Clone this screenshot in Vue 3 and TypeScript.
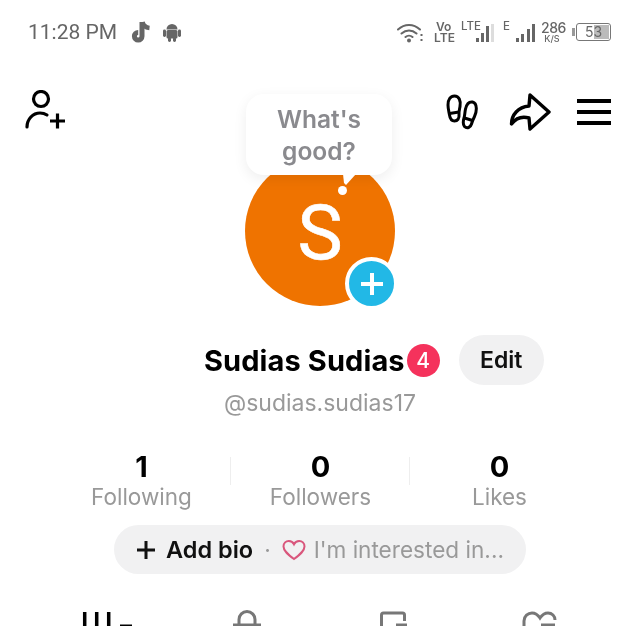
<template>
  <div class="profile">
    <div class="status-bar">
      <span class="time">11:28 PM</span>
      <svg class="tiktok" width="22" height="24" viewBox="0 0 22 24">
        <path d="M12 2v14.200a3.800 3.800 0 1 1-3.800-3.800" fill="none" stroke="#666" stroke-width="5" />
        <path d="M12.500 2c.6 3.400 3 5.600 7 6" fill="none" stroke="#666" stroke-width="4.600" />
      </svg>
      <svg class="android" width="18" height="20" viewBox="0 0 18 20">
        <path d="M3.500 7.500a5.500 5.500 0 0 1 11 0z" fill="#666" />
        <rect x="3.500" y="8" width="11" height="8.500" rx="1.500" fill="#666" />
        <rect x="0" y="7.500" width="3" height="7.500" rx="1.400" fill="#666" />
        <rect x="15" y="7.500" width="3" height="7.500" rx="1.400" fill="#666" />
        <rect x="5" y="15" width="3" height="5" rx="1.400" fill="#666" />
        <rect x="10" y="15" width="3" height="5" rx="1.400" fill="#666" />
      </svg>

      <div class="status-right">
        <svg width="26" height="21" viewBox="0 0 26 21">
          <path d="M1 7.500c6.500-6 15.500-6 22 0M4.500 11.500c4.500-4 10.500-4 15 0M8.500 15c2-1.800 5-1.800 7 0" fill="none" stroke="#666" stroke-width="2" stroke-linecap="round" />
          <circle cx="12" cy="18.500" r="2" fill="#666" />
          <rect x="23.500" y="12" width="2" height="2" fill="#666" />
          <rect x="23.500" y="17" width="2" height="2" fill="#666" />
        </svg>
        <span class="volte">Vo<br />LTE</span>
        <div class="signal">
          <span class="net">LTE</span>
          <span v-for="h in [4, 9, 16]" :key="h" class="bar" :style="{ height: h + 'px' }"></span>
          <span class="bar faded" style="height: 18px"></span>
        </div>
        <div class="signal second">
          <span class="net">E</span>
          <span v-for="h in [4, 8, 13, 18]" :key="h" class="bar" :style="{ height: h + 'px' }"></span>
        </div>
        <span class="speed">286<small>K/S</small></span>
        <div class="battery">
          <span class="battery-fill"></span>
          <span class="battery-text">53</span>
        </div>
      </div>
    </div>

    <div class="top-nav">
      <svg width="44" height="44" viewBox="0 0 44 44" fill="none" stroke="#000" stroke-width="3.200">
        <circle cx="17" cy="9" r="7.500" />
        <path d="M3 37c0-8 6-14 13-14 3 0 5 .7 7 2" stroke-linecap="round" />
        <path d="M26 31h15M33.500 23.500v15" />
      </svg>
      <div class="nav-right">
        <svg class="steps" width="34" height="36" viewBox="0 0 34 36" fill="none" stroke="#000" stroke-width="3">
          <path d="M8.500 2C4.500 2 2 5.500 2 11c0 4 1 7 1.500 10 .6 4 2.500 6 5 6 3 0 5-2.500 4.500-6.500-.3-2.500.5-5 1-8C15 6.500 13 2 8.500 2z" />
          <path d="M3.500 19.500l9.500-1.500" />
          <path d="M26.500 8c-4-.5-6 2.500-7 7-.8 3.500-.5 6-1.500 9-1 3.500-1.500 6 .5 8.500 2.500 2.500 6 1 7-2.500.8-3 1.500-4.500 3-7.500 2-4 3.500-13-2-14.500z" />
          <path d="M18.500 24l8 2.500" />
        </svg>
        <svg class="share" width="42" height="38" viewBox="0 0 42 38" fill="none" stroke="#000" stroke-width="3.400" stroke-linejoin="round">
          <path d="M21 2l19 17-19 17-1-11c-7-2-13 0-17.500 6 0-9 6.500-17 17.500-18z" />
        </svg>
        <div class="burger"><span></span><span></span><span></span></div>
      </div>
    </div>

    <div class="avatar-wrap">
      <div class="avatar">S</div>
      <div class="bubble">What's<br />good?</div>
      <svg class="bubble-tail" width="14" height="12" viewBox="0 0 14 12"><path d="M0 0h13L3 11 1 9z" fill="#fff" /></svg>
      <span class="bubble-dot"></span>
      <span class="add-badge">
        <svg width="24" height="24" viewBox="0 0 24 24"><path d="M12 1v22M1 12h22" stroke="#fff" stroke-width="4" /></svg>
      </span>
    </div>

    <div class="name-row">
      <span class="name">Sudias Sudias</span>
      <span class="count">4</span>
      <button class="edit">Edit</button>
    </div>
    <div class="handle">@sudias.sudias17</div>

    <div class="stats">
      <div v-for="s in stats" :key="s.label" class="stat">
        <strong>{{ s.value }}</strong>
        <span>{{ s.label }}</span>
      </div>
    </div>

    <div class="bio">
      <svg width="20" height="20" viewBox="0 0 20 20"><path d="M10 1v18M1 10h18" stroke="#111" stroke-width="3" /></svg>
      <b>Add bio</b>
      <i>·</i>
      <svg width="24" height="22" viewBox="0 0 24 22">
        <path d="M12 20C6 15.500 1.500 12 1.500 7.500 1.500 4 4 2 6.800 2 9 2 11 3.200 12 5.200 13 3.200 15 2 17.200 2 20 2 22.500 4 22.500 7.500 22.500 12 18 15.500 12 20z" fill="none" stroke="#d9567c" stroke-width="2" />
      </svg>
      <span>I'm interested in...</span>
    </div>

    <div class="tabs">
      <svg width="70" height="16" viewBox="0 0 70 16" stroke="#000" stroke-width="3.500">
        <path d="M20.700 2v14M32.700 2v14M44.700 2v14" />
        <path d="M56 15.500h12" stroke-width="2" />
      </svg>
      <svg width="70" height="16" viewBox="0 0 70 16" fill="none" stroke="#777" stroke-width="3">
        <path d="M27 14v-4.500a8 8 0 0 1 16 0v4.500" />
        <path d="M21 15h28" />
      </svg>
      <svg width="70" height="16" viewBox="0 0 70 16" fill="none" stroke="#777" stroke-width="3">
        <path d="M21.500 16V5a2 2 0 0 1 2-2h19a2 2 0 0 1 2 2v6" />
        <path d="M36 15h11" />
      </svg>
      <svg width="70" height="16" viewBox="0 0 70 16" fill="none" stroke="#777" stroke-width="3">
        <path d="M16 16v-5c0-5 4-8 8-8 3.500 0 6 2 8 5 2-3 4.500-5 8-5 4 0 7 3 7 7" />
        <path d="M33 15h14" />
      </svg>
    </div>
  </div>
</template>

<script setup lang="ts">
const stats = [
  { value: '1', label: 'Following' },
  { value: '0', label: 'Followers' },
  { value: '0', label: 'Likes' },
]
</script>

<style>
html,
body {
  margin: 0;
  background: #fff;
  overflow: hidden;
}
</style>

<style scoped>
.profile {
  width: 640px;
  height: 626px;
  overflow: hidden;
  font-family: Inter, "Liberation Sans", sans-serif;
  color: #000;
  filter: blur(0.35px);
}
.status-bar {
  height: 64px;
  display: flex;
  align-items: center;
  padding: 0 29px 0 28px;
  box-sizing: border-box;
}
.time {
  font-family: Roboto, sans-serif;
  font-size: 21px;
  color: #666;
  margin-right: 13px;
}
.android {
  margin-left: 11px;
}
.status-right {
  margin-left: auto;
  display: flex;
  align-items: center;
  color: #666;
}
.volte {
  width: 19px;
  margin-left: 11px;
  font-size: 12px;
  line-height: 11px;
  font-weight: 600;
  text-align: center;
}
.signal {
  position: relative;
  height: 20px;
  display: flex;
  align-items: flex-end;
  gap: 2px;
  margin-left: 8px;
  padding-left: 15px;
}
.signal.second {
  padding-left: 13px;
  margin-left: 9px;
  gap: 2.300px;
}
.net {
  position: absolute;
  left: 0;
  top: -3px;
  font-size: 11.500px;
  line-height: 15px;
  font-weight: 500;
}
.bar {
  width: 3px;
  background: #666;
}
.bar.faded {
  background: #ddd;
}
.speed {
  width: 22px;
  margin-left: 6px;
  font-size: 14px;
  line-height: 13px;
  font-weight: 500;
  letter-spacing: -0.5px;
  text-align: center;
  display: flex;
  flex-direction: column;
}
.speed small {
  font-size: 9px;
  line-height: 9px;
  letter-spacing: 0;
}
.battery {
  position: relative;
  width: 33px;
  height: 16px;
  border: 1.500px solid #777;
  border-radius: 3px;
  margin-left: 13px;
  box-sizing: content-box;
}
.battery::before {
  content: "";
  position: absolute;
  left: -5px;
  top: 4px;
  width: 2.500px;
  height: 8px;
  background: #999;
}
.battery-fill {
  position: absolute;
  top: 1px;
  bottom: 1px;
  left: 17px;
  right: 1px;
  background: #bbb;
}
.battery-text {
  position: absolute;
  inset: 0;
  text-align: center;
  font-size: 14px;
  line-height: 16px;
  color: #666;
}
.top-nav {
  height: 48px;
  margin-top: 24px;
  display: flex;
  justify-content: space-between;
  align-items: center;
  padding: 0 29px 0 24px;
}
.nav-right {
  display: flex;
  align-items: center;
}
.share {
  margin-left: 29px;
}
.burger {
  width: 34px;
  margin-left: 26px;
  display: flex;
  flex-direction: column;
  gap: 7.500px;
}
.burger span {
  height: 3.500px;
  background: #000;
}
.avatar-wrap {
  position: relative;
  width: 150px;
  height: 150px;
  margin: 20px auto 0;
}
.avatar {
  width: 150px;
  height: 150px;
  border-radius: 50%;
  background: #ef7300;
  color: #fff;
  font-size: 76px;
  line-height: 154px;
  text-align: center;
  font-family: Roboto, sans-serif;
  -webkit-text-stroke: 0.6px #fff;
}
.bubble {
  position: absolute;
  left: 1px;
  top: -62px;
  width: 146px;
  height: 81px;
  background: #fff;
  border-radius: 18px;
  box-shadow: 0 4px 14px rgba(0, 0, 0, 0.07);
  color: #8a8a8e;
  font-size: 24.500px;
  font-weight: 600;
  line-height: 32px;
  text-align: center;
  padding-top: 9px;
  box-sizing: border-box;
}
.bubble-tail {
  position: absolute;
  left: 98px;
  top: 18px;
}
.bubble-dot {
  position: absolute;
  left: 93px;
  top: 30px;
  width: 9px;
  height: 9px;
  border-radius: 50%;
  background: #fff;
}
.add-badge {
  position: absolute;
  right: -3px;
  bottom: -4px;
  width: 45px;
  height: 45px;
  border: 4px solid #fff;
  border-radius: 50%;
  background: #22b8e6;
  display: flex;
  align-items: center;
  justify-content: center;
}
.name-row {
  display: flex;
  align-items: center;
  height: 50px;
  margin-top: 29px;
  padding-left: 204px;
}
.name {
  font-size: 29px;
  font-weight: 700;
  letter-spacing: 0.1px;
}
.count {
  width: 33px;
  height: 33px;
  margin-left: 2px;
  border-radius: 50%;
  background: #f5325c;
  color: #fff;
  font-size: 21px;
  font-weight: 500;
  line-height: 33px;
  text-align: center;
}
.edit {
  margin-left: 19px;
  width: 85px;
  height: 50px;
  border: 0;
  border-radius: 25px;
  background: #f1f1f2;
  font-family: inherit;
  font-size: 23px;
  font-weight: 600;
  color: #111;
  padding: 0;
}
.handle {
  margin-top: 3px;
  text-align: center;
  color: #999;
  font-size: 23px;
  line-height: 30px;
}
.stats {
  margin-top: 32px;
  padding: 0 51px 0 52px;
  display: grid;
  grid-template-columns: repeat(3, 179px);
}
.stat {
  position: relative;
  display: flex;
  flex-direction: column;
  align-items: center;
}
.stat + .stat::before {
  content: "";
  position: absolute;
  left: -1px;
  top: 7px;
  height: 28px;
  border-left: 1px solid #eee;
}
.stat strong {
  font-size: 29px;
  line-height: 34px;
  font-weight: 700;
}
.stat span {
  font-size: 22.500px;
  line-height: 26px;
  color: #999;
}
.bio {
  width: 412px;
  height: 49px;
  margin: 15px auto 0;
  padding-left: 22px;
  box-sizing: border-box;
  border-radius: 25px;
  background: #f1f1f2;
  display: flex;
  align-items: center;
  font-size: 22.600px;
}
.bio b {
  margin-left: 10px;
  font-size: 23.500px;
  font-weight: 600;
  color: #111;
}
.bio i {
  margin: 0 11px;
  color: #999;
  font-style: normal;
}
.bio span {
  margin-left: 8px;
  color: #999;
}
.tabs {
  margin-top: 36px;
  height: 16px;
  padding-left: 64px;
  display: grid;
  grid-template-columns: repeat(4, 70px);
  column-gap: 78px;
}
</style>
